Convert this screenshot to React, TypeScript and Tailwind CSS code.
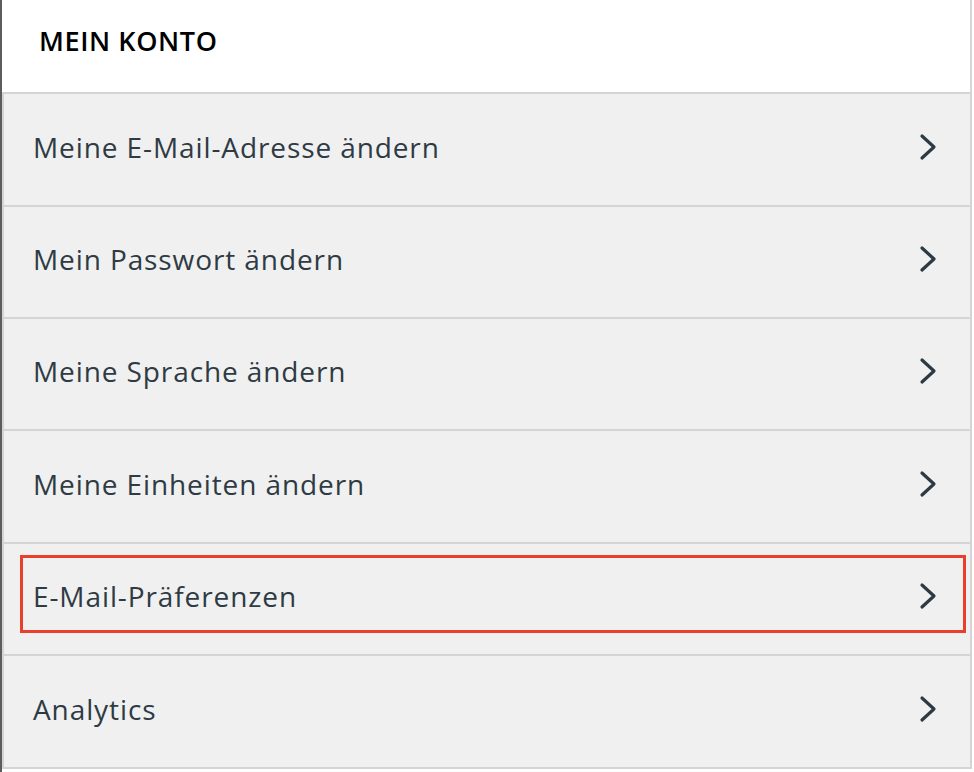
const rows = [
  { label: "Meine E-Mail-Adresse ändern", h: "h-[113px]" },
  { label: "Mein Passwort ändern", h: "h-[112px]" },
  { label: "Meine Sprache ändern", h: "h-[112px]" },
  { label: "Meine Einheiten ändern", h: "h-[113px]" },
  { label: "E-Mail-Präferenzen", h: "h-[112px]", highlight: true },
  { label: "Analytics", h: "h-[113px]" },
];

function Chevron() {
  return (
    <svg width="20" height="28" viewBox="0 0 20 28" fill="none" className="text-[#2c3a44]">
      <path d="M4 3 L16 14 L4 25" stroke="currentColor" strokeWidth="3.2" strokeLinecap="round" strokeLinejoin="round" />
    </svg>
  );
}

export default function App() {
  return (
    <div className="flex h-[772px] w-[974px] bg-white font-['Open_Sans',sans-serif]">
      <div className="w-[2px] shrink-0 bg-[#5c5c5c]" />
      <div className="flex w-[970px] flex-col">
        <div className="flex h-[92px] items-center border-r-2 border-[#d6d6d6] pb-[10px] pl-[37px]">
          <h1 className="text-[27px] font-semibold tracking-[0.6px] text-black">MEIN KONTO</h1>
        </div>
        <ul className="border-x-2 border-b-2 border-[#d4d4d4] bg-[#f0f0f0]">
          {rows.map((row) => (
            <li
              key={row.label}
              className={`relative flex items-center justify-between border-t-2 border-[#d4d4d4] pb-[6px] pl-[29px] pr-[32px] ${row.h}`}
            >
              <span className="text-[28px] tracking-[0.9px] text-[#2f3b44]">{row.label}</span>
              <Chevron />
              {row.highlight && (
                <span className="pointer-events-none absolute left-[16px] right-[4px] top-[11px] bottom-[21px] border-[3px] border-[#e8402a]" />
              )}
            </li>
          ))}
        </ul>
      </div>
    </div>
  );
}
